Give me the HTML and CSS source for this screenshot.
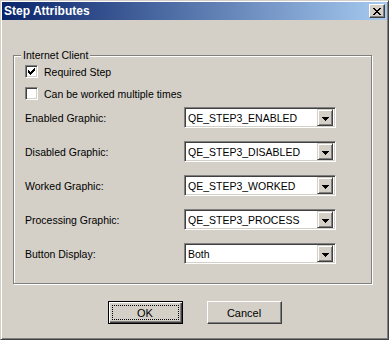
FILE: index.html
```html
<!DOCTYPE html>
<html lang="en">

<head>
    <meta charset="UTF-8">
    <title>Step Attributes</title>
    <link rel="stylesheet" href="styles.css">
</head>

<body>
    <div class="window">
        <div class="titlebar">
            <span class="title">Step Attributes</span>
            <button class="close-btn" title="Close">
                <svg width="8" height="7" viewBox="0 0 8 7" shape-rendering="crispEdges">
                    <path d="M0 0h2v1H0zM6 0h2v1H6zM1 1h2v1H1zM5 1h2v1H5zM2 2h4v1H2zM3 3h2v1H3zM2 4h4v1H2zM1 5h2v1H1zM5 5h2v1H5zM0 6h2v1H0zM6 6h2v1H6z" fill="#000"/>
                </svg>
            </button>
        </div>

        <div class="content">
            <fieldset class="group">
                <legend>Internet Client</legend>

                <label class="check-row">
                    <span class="checkbox">
                        <svg width="7" height="7" viewBox="0 0 7 7" shape-rendering="crispEdges">
                            <path d="M0 2h1v3H0zM1 3h1v3H1zM2 4h1v3H2zM3 3h1v3H3zM4 2h1v3H4zM5 1h1v3H5zM6 0h1v3H6z" fill="#000"/>
                        </svg>
                    </span>
                    Required Step
                </label>
                <label class="check-row">
                    <span class="checkbox"></span>
                    Can be worked multiple times
                </label>

                <div class="fields">
                    <span class="field-label">Enabled Graphic:</span>
                    <div class="combo"><span class="combo-text">QE_STEP3_ENABLED</span><span class="combo-btn"></span></div>

                    <span class="field-label">Disabled Graphic:</span>
                    <div class="combo"><span class="combo-text">QE_STEP3_DISABLED</span><span class="combo-btn"></span></div>

                    <span class="field-label">Worked Graphic:</span>
                    <div class="combo"><span class="combo-text">QE_STEP3_WORKED</span><span class="combo-btn"></span></div>

                    <span class="field-label">Processing Graphic:</span>
                    <div class="combo"><span class="combo-text">QE_STEP3_PROCESS</span><span class="combo-btn"></span></div>

                    <span class="field-label">Button Display:</span>
                    <div class="combo"><span class="combo-text">Both</span><span class="combo-btn"></span></div>
                </div>
            </fieldset>

            <div class="actions">
                <button class="btn default"><span class="focus">OK</span></button>
                <button class="btn"><span class="focus-none">Cancel</span></button>
            </div>
        </div>
    </div>
</body>

</html>
```

FILE: styles.css
```css
* {
    box-sizing: border-box;
}

body {
    margin: 0;
    font-family: "Liberation Sans", Arial, sans-serif;
    font-size: 10.5px;
    color: #000;
    background: #d4d0c8;
}

.window {
    width: 389px;
    height: 340px;
    padding: 1px;
    background: #d4d0c8;
    border: 1px solid;
    border-color: #d4d0c8 #404040 #404040 #d4d0c8;
    box-shadow: inset 1px 1px 0 #fff, inset -1px -1px 0 #808080;
}

.titlebar {
    height: 18px;
    display: flex;
    align-items: center;
    justify-content: space-between;
    padding: 0 2px 0 2px;
    background: linear-gradient(to right, #0a246a, #a6caf0);
}

.title {
    color: #fff;
    font-weight: bold;
    font-size: 12px;
}

.close-btn {
    width: 16px;
    height: 14px;
    padding: 0;
    display: flex;
    align-items: center;
    justify-content: center;
    background: #d4d0c8;
    border: 1px solid;
    border-color: #fff #404040 #404040 #fff;
    box-shadow: inset -1px -1px 0 #808080;
}

.content {
    padding: 0 11px;
}

.group {
    margin: 29px 0 0;
    padding: 0 0 19px 11px;
    width: 359px;
    border: 1px solid #808080;
    box-shadow: inset 1px 1px 0 #fff, 1px 1px 0 #fff;
}

.group legend {
    margin-left: -4px;
    padding: 0 2px;
    line-height: 13px;
    background: #d4d0c8;
}

.check-row {
    display: flex;
    align-items: center;
    gap: 6px;
    height: 13px;
    margin-top: 9px;
}

.group legend + .check-row {
    margin-top: 3px;
}

.checkbox {
    width: 13px;
    height: 13px;
    display: flex;
    align-items: center;
    justify-content: center;
    background: #fff;
    border: 1px solid;
    border-color: #808080 #fff #fff #808080;
    box-shadow: inset 1px 1px 0 #404040, inset -1px -1px 0 #d4d0c8;
}

.fields {
    display: grid;
    grid-template-columns: 159px 152px;
    row-gap: 13px;
    align-items: center;
    margin-top: 7px;
}

.combo {
    height: 21px;
    display: flex;
    align-items: center;
    padding: 2px;
    background: #fff;
    border: 1px solid;
    border-color: #808080 #fff #fff #808080;
    box-shadow: inset 1px 1px 0 #404040, inset -1px -1px 0 #d4d0c8;
}

.combo-text {
    flex: 1;
    padding-left: 1px;
}

.combo-btn {
    width: 16px;
    height: 17px;
    background: #d4d0c8 url("data:image/svg+xml,%3Csvg xmlns='http://www.w3.org/2000/svg' width='7' height='4'%3E%3Cpath d='M0 0h7v1H0zM1 1h5v1H1zM2 2h3v1H2zM3 3h1v1H3z'/%3E%3C/svg%3E") no-repeat 4px 7px;
    border: 1px solid;
    border-color: #d4d0c8 #404040 #404040 #d4d0c8;
    box-shadow: inset 1px 1px 0 #fff, inset -1px -1px 0 #808080;
}

.actions {
    display: flex;
    justify-content: center;
    gap: 24px;
    margin-top: 17px;
}

.btn {
    width: 75px;
    height: 23px;
    padding: 3px;
    font-family: inherit;
    font-size: 11px;
    background: #d4d0c8;
    border: 1px solid;
    border-color: #fff #404040 #404040 #fff;
    box-shadow: inset -1px -1px 0 #808080;
}

.btn.default {
    border-color: #000;
    box-shadow: inset 1px 1px 0 #fff, inset -1px -1px 0 #404040, inset -2px -2px 0 #808080;
}

.focus,
.focus-none {
    display: flex;
    align-items: center;
    justify-content: center;
    height: 100%;
    border: 1px dotted transparent;
}

.focus {
    border-color: #000;
}
```
